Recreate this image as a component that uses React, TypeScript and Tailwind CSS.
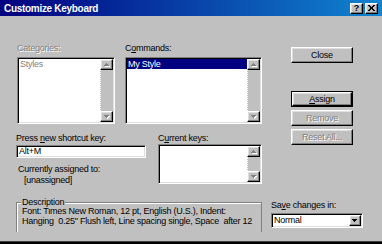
import type { ReactNode } from 'react';

const raised =
  'bg-[#c0c0c0] border border-t-white border-l-white border-r-black border-b-black shadow-[inset_-1px_-1px_0_#808080,inset_1px_1px_0_#dfdfdf]';
const sunken =
  'border border-t-[#808080] border-l-[#808080] border-r-white border-b-white shadow-[inset_1px_1px_0_#000,inset_-1px_-1px_0_#dfdfdf] p-[1px]';
const dim = 'text-[#808080] [text-shadow:1px_1px_0_#fff]';

function Arrow({ up, off }: { up?: boolean; off?: boolean }) {
    const pts = up ? '2.5,0 5,3 0,3' : '0,0 5,0 2.5,3';
    return (
        <svg width="6" height="4" viewBox="0 0 6 4" shapeRendering="crispEdges">
            {off && <polygon points={pts} fill="#fff" transform="translate(1 1)" />}
            <polygon points={pts} fill={off ? '#808080' : '#000'} />
        </svg>
    );
}

function ListBox({ className, children }: { className: string; children?: ReactNode }) {
    return (
        <div className={`${sunken} bg-white flex ${className}`}>
            <div className="flex-1 bg-white overflow-hidden">{children}</div>
            <div className="w-[13px] flex flex-col">
                <div className={`${raised} h-[11px] flex items-center justify-center`}>
                    <Arrow up off />
                </div>
                <div className="flex-1 bg-[#c0c0c0] border-l border-dotted border-white" />
                <div className={`${raised} h-[11px] flex items-center justify-center`}>
                    <Arrow off />
                </div>
            </div>
        </div>
    );
}

function Btn({ children, isDefault, disabled }: { children: ReactNode; isDefault?: boolean; disabled?: boolean }) {
    const face = `${raised} flex-1 flex items-center justify-center ${disabled ? dim : ''}`;
    return (
        <div className={`w-[62px] h-[16px] flex ${isDefault ? 'border border-black' : ''}`}>
            <div className={face}>{children}</div>
        </div>
    );
}

function TitleBar() {
    return (
        <div className="h-[16px] flex items-center justify-between pl-[4px] pr-[4px] bg-[linear-gradient(90deg,#000080,#1084d0)]">
            <span className="text-white font-bold text-[10px] tracking-[-0.3px]">Customize Keyboard</span>
            <div className="flex gap-[2px]">
                <div className={`${raised} w-[13px] h-[11px] flex items-center justify-center font-bold text-[9px] leading-[9px] tracking-normal`}>?</div>
                <div className={`${raised} w-[13px] h-[11px] flex items-center justify-center`}>
                    <svg width="7" height="6" viewBox="0 0 7 6" shapeRendering="crispEdges">
                        <path d="M0 0h2v1h-2zM5 0h2v1h-2zM1 1h2v1h-2zM4 1h2v1h-2zM2 2h3v2h-3zM1 4h2v1h-2zM4 4h2v1h-2zM0 5h2v1h-2zM5 5h2v1h-2z" fill="#000" />
                    </svg>
                </div>
            </div>
        </div>
    );
}

export default function App() {
    return (
        <div className="w-[382px] h-[244px] bg-[#c0c0c0] flex flex-col overflow-hidden text-[9px] leading-[11px] tracking-[-0.25px] text-black font-['Liberation_Sans',Arial,sans-serif]">
            <TitleBar />

            <div className="flex flex-1">
                {/* left side */}
                <div className="ml-[16px] mt-[27px] w-[246px] flex flex-col">
                    <div className="flex">
                        <div className="w-[99px] pl-[1px] flex flex-col">
                            <span className={dim}>Categories:</span>
                            <ListBox className="mt-[3px] h-[67px]">
                                <div className={`pl-[1px] ${dim}`}>Styles</div>
                            </ListBox>
                        </div>
                        <div className="ml-[10px] w-[137px] flex flex-col">
                            <span>C<u>o</u>mmands:</span>
                            <ListBox className="mt-[3px] h-[67px]">
                                <div className="bg-[#000080] text-white pl-[1px] h-[10px] leading-[10px]">My Style</div>
                            </ListBox>
                        </div>
                    </div>

                    <div className="flex mt-[9px]">
                        <div className="w-[130px] flex flex-col">
                            <span>Press <u>n</u>ew shortcut key:</span>
                            <div className={`${sunken} mt-[1px] h-[13px] bg-white flex items-center`}>
                                <span className="pl-[1px] leading-[9px]">Alt+M</span>
                            </div>
                            <span className="mt-[6px] pl-[2px]">Currently assigned to:</span>
                            <span className="pl-[8px]">[unassigned]</span>
                        </div>
                        <div className="ml-[12px] w-[104px] flex flex-col">
                            <span>C<u>u</u>rrent keys:</span>
                            <ListBox className="h-[40px]" />
                        </div>
                    </div>

                    {/* description group */}
                    <div className="relative mt-[16px] h-[30px] border border-b-0 border-[#808080]">
                        <div className="h-full border-t border-l border-white pl-[4px] pt-[2px] leading-[10px] whitespace-nowrap">
                            <div>Font: Times New Roman, 12 pt, English (U.S.), Indent:</div>
                            <div>Hanging&nbsp; 0.25" Flush left, Line spacing single, Space&nbsp; after 12</div>
                        </div>
                        <span className="absolute -top-[6px] left-[4px] px-[1px] bg-[#c0c0c0]">Description</span>
                    </div>
                </div>

                {/* right side */}
                <div className="ml-[9px] w-[101px] flex flex-col">
                    <div className="ml-[20px] mt-[31px] flex flex-col">
                        <Btn>Close</Btn>
                        <div className="mt-[28px]">
                            <Btn isDefault><u>A</u>ssign</Btn>
                        </div>
                        <div className="mt-[3px]">
                            <Btn disabled>Remove</Btn>
                        </div>
                        <div className="mt-[3px]">
                            <Btn disabled>Reset All...</Btn>
                        </div>
                    </div>
                    <span className="mt-[55px]">Sa<u>v</u>e changes in:</span>
                    <div className={`${sunken} mt-[2px] w-[92px] h-[15px] bg-white flex`}>
                        <span className="flex-1 pl-[1px] leading-[11px]">Normal</span>
                        <div className={`${raised} w-[12px] flex items-center justify-center`}>
                            <Arrow />
                        </div>
                    </div>
                </div>
            </div>

            <div className="h-[3px] bg-black border-t border-[#404040]" />
        </div>
    );
}
